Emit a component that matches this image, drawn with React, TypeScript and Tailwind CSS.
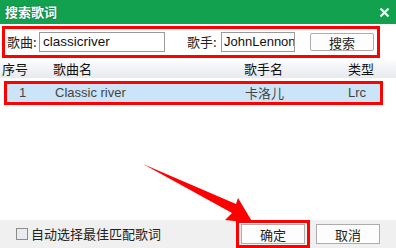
const cjk = "font-['Microsoft_YaHei','Noto_Sans_CJK_SC',sans-serif]";
const latin = "font-['Tahoma','Liberation_Sans','Noto_Sans_CJK_SC',sans-serif]";

export default function App() {
  return (
    <div className={`relative w-[396px] h-[248px] flex flex-col bg-white text-[12px] text-[#222] overflow-hidden ${cjk}`}>
      <div className="h-[24px] shrink-0 bg-[#12a24f] flex items-center justify-between pl-[5px] pr-[6px]">
        <span className="text-white font-bold text-[13px] [text-shadow:0_0_2px_rgba(0,0,0,0.35)]">搜索歌词</span>
        <svg width="11" height="11" viewBox="0 0 11 11">
          <path d="M1.5 1.5 L9.5 9.5 M9.5 1.5 L1.5 9.5" stroke="white" strokeWidth="2.2" />
        </svg>
      </div>

      <div className="mt-[2px] ml-[2px] w-[378px] h-[32px] shrink-0 border-[3px] border-[#ff0000] flex items-center">
        <span className="ml-[2px] w-[32px] text-[13px]">歌曲:</span>
        <div className={`w-[126px] h-[20px] border border-[#9a9a9a] flex items-center pl-[3px] text-[13.5px] text-[#111] ${latin}`}>
          classicriver
        </div>
        <span className="ml-[22px] w-[34px] text-[13px]">歌手:</span>
        <div className={`w-[74px] h-[20px] border border-[#9a9a9a] flex items-center pl-[2px] text-[13px] text-[#111] overflow-hidden whitespace-nowrap ${latin}`}>
          JohnLennon
        </div>
        <button className="ml-[15px] w-[64px] h-[18px] border border-[#adadad] rounded-[2px] bg-[#fdfdfd] text-[13px] leading-none flex items-center justify-center">
          搜索
        </button>
      </div>

      <div className="mt-[2px] h-[18px] shrink-0 bg-gradient-to-b from-[#fbfcfd] to-[#e6e9ee] flex items-center text-[13px] text-[#111]">
        <span className="ml-[2px] w-[51px]">序号</span>
        <span className="w-[191px]">歌曲名</span>
        <span className="w-[104px]">歌手名</span>
        <span>类型</span>
      </div>

      <div className="mt-[3px] ml-[4px] w-[379px] h-[24px] shrink-0 border-[3px] border-[#ff0000] bg-[#cce4f7] flex items-center text-[13px] text-[#444]">
        <span className={`ml-[12px] w-[36px] ${latin}`}>1</span>
        <span className={`w-[190px] ${latin}`}>Classic river</span>
        <span className="w-[103px] text-[13px]">卡洛儿</span>
        <span className={latin}>Lrc</span>
      </div>

      <div className="flex-1" />

      <div className="h-[28px] shrink-0 bg-[#f0f0f0] flex items-center">
        <div className="ml-[16px] w-[12px] h-[12px] border border-[#8c8c8c] bg-[#e8ebef]" />
        <span className="ml-[3px] text-[13px] text-[#222]">自动选择最佳匹配歌词</span>
        <div className="ml-auto mr-[86px] self-end w-[74px] h-[28px] border-[3px] border-[#ff0000] flex items-center justify-center">
          <button className="w-[64px] h-[20px] border border-[#adadad] bg-[#fdfdfd] text-[13px] leading-none flex items-center justify-center">
            确定
          </button>
        </div>
      </div>
      <button className="absolute left-[316px] top-[224px] w-[64px] h-[20px] border border-[#adadad] bg-[#fdfdfd] text-[13px] leading-none flex items-center justify-center">
        取消
      </button>

      <svg className="absolute left-0 top-0 pointer-events-none" width="396" height="248" viewBox="0 0 396 248">
        <polygon points="143,164 236,204 238,198 253,223 225,220 232,213" fill="#ff0000" />
      </svg>
    </div>
  );
}
